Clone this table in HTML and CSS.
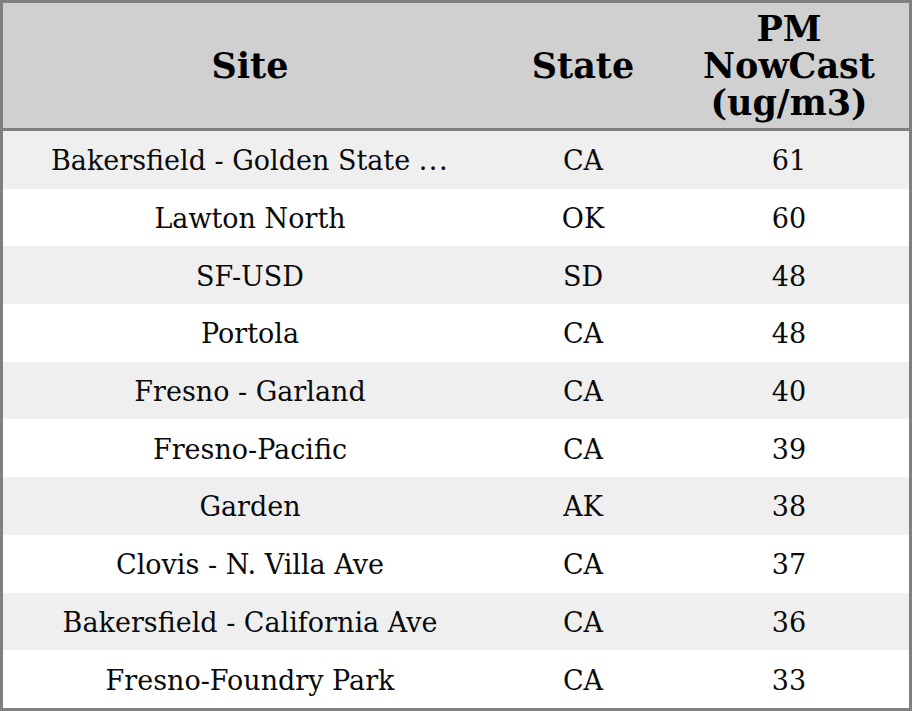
FILE: index.html
```html
<!DOCTYPE html>
<html>
<head>
<meta charset="utf-8">
<link rel="stylesheet" href="styles.css">
</head>
<body>
<div class="frame">
  <table class="grid">
    <colgroup>
      <col class="c-site">
      <col class="c-state">
      <col class="c-pm">
    </colgroup>
    <thead>
      <tr>
        <th>Site</th>
        <th>State</th>
        <th>PM<br>NowCast<br>(ug/m3)</th>
      </tr>
    </thead>
    <tbody>
      <tr class="odd"><td>Bakersfield - Golden State <span class="dots">...</span></td><td>CA</td><td>61</td></tr>
      <tr><td>Lawton North</td><td>OK</td><td>60</td></tr>
      <tr class="odd"><td>SF-USD</td><td>SD</td><td>48</td></tr>
      <tr><td>Portola</td><td>CA</td><td>48</td></tr>
      <tr class="odd"><td>Fresno - Garland</td><td>CA</td><td>40</td></tr>
      <tr><td>Fresno-Pacific</td><td>CA</td><td>39</td></tr>
      <tr class="odd"><td>Garden</td><td>AK</td><td>38</td></tr>
      <tr><td>Clovis - N. Villa Ave</td><td>CA</td><td>37</td></tr>
      <tr class="odd"><td>Bakersfield - California Ave</td><td>CA</td><td>36</td></tr>
      <tr><td>Fresno-Foundry Park</td><td>CA</td><td>33</td></tr>
    </tbody>
  </table>
</div>
</body>
</html>
```
FILE: styles.css
```css
html, body {
  margin: 0;
  padding: 0;
  background: #ffffff;
}
.frame {
  width: 912px;
  height: 711px;
  box-sizing: border-box;
  border: 3px solid #808080;
  overflow: hidden;
}
.grid {
  width: 906px;
  border-collapse: collapse;
  table-layout: fixed;
  font-family: "DejaVu Serif", serif;
  color: #0a0a0a;
}
.c-site { width: 494px; }
.c-state { width: 172px; }
.c-pm { width: 240px; }
.grid th {
  height: 125px;
  padding: 0;
  background: #d0d0d0;
  border-bottom: 3px solid #808080;
  font-size: 35px;
  font-weight: bold;
  line-height: 37px;
  text-align: center;
  vertical-align: middle;
  color: #000000;
}
.grid td {
  height: 55.7px;
  padding: 2px 0 0 0;
  font-size: 27px;
  text-align: center;
  vertical-align: middle;
  white-space: nowrap;
  background: #ffffff;
}
.grid tr.odd td {
  background: #efefef;
}
.dots {
  letter-spacing: 1.5px;
}
```
